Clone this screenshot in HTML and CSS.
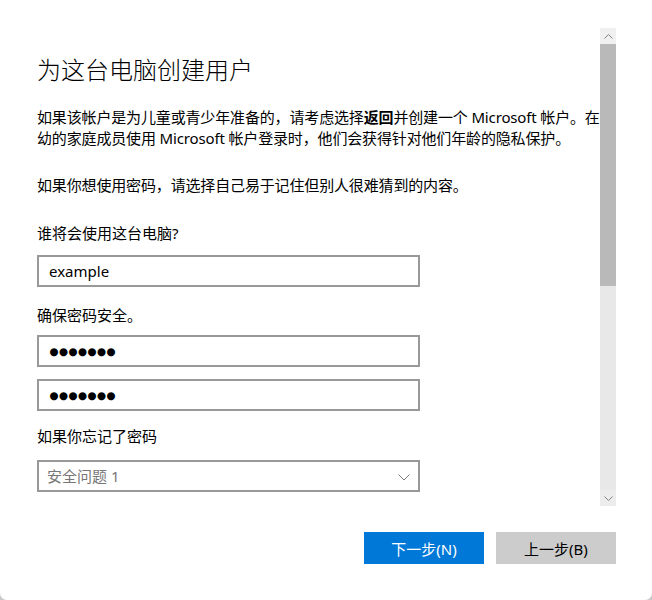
FILE: index.html
```html
<!DOCTYPE html>
<html lang="zh-CN">
<head>
<meta charset="utf-8">
<title>为这台电脑创建用户</title>
<link rel="stylesheet" href="styles.css">
</head>
<body>
<div class="window">
  <div class="main">
    <div class="view">
      <h1 class="title">为这台电脑创建用户</h1>
      <p class="para">如果该帐户是为儿童或青少年准备的，请考虑选择<b>返回</b>并创建一个 Microsoft 帐户。在年<br>幼的家庭成员使用 Microsoft 帐户登录时，他们会获得针对他们年龄的隐私保护。</p>
      <p class="para para2">如果你想使用密码，请选择自己易于记住但别人很难猜到的内容。</p>
      <div class="label label1">谁将会使用这台电脑?</div>
      <div class="field">example</div>
      <div class="label label2">确保密码安全。</div>
      <div class="field pwd"><span class="dots"><span>●</span><span>●</span><span>●</span><span>●</span><span>●</span><span>●</span><span>●</span></span></div>
      <div class="field pwd pwd2"><span class="dots"><span>●</span><span>●</span><span>●</span><span>●</span><span>●</span><span>●</span><span>●</span></span></div>
      <div class="label label3">如果你忘记了密码</div>
      <div class="field select">
        <span class="placeholder">安全问题 1</span>
        <svg class="chev" width="12" height="7" viewBox="0 0 12 7"><path d="M0.5 0.5 L6 6 L11.5 0.5" fill="none" stroke="#7a7a7a" stroke-width="1"/></svg>
      </div>
    </div>
    <div class="scrollbar">
      <div class="sb-btn"><svg width="9" height="5" viewBox="0 0 9 5"><path d="M0.5 4.5 L4.5 0.5 L8.5 4.5" fill="none" stroke="#858585" stroke-width="1"/></svg></div>
      <div class="sb-thumb"></div>
      <div class="sb-track"></div>
      <div class="sb-btn sb-down"><svg width="9" height="5" viewBox="0 0 9 5"><path d="M0.5 0.5 L4.5 4.5 L8.5 0.5" fill="none" stroke="#858585" stroke-width="1"/></svg></div>
    </div>
  </div>
  <div class="footer">
    <button class="btn primary">下一步(N)</button>
    <button class="btn secondary">上一步(B)</button>
  </div>
</div>
</body>
</html>
```
FILE: styles.css
```css
html, body {
  margin: 0;
  padding: 0;
  background: #c9c9c9;
}
body {
  font-family: "Noto Sans", "Noto Sans CJK SC", sans-serif;
  color: #000;
  font-size: 15px;
}
.window {
  width: 652px;
  height: 600px;
  background: #fff;
  border-radius: 0 0 7px 7px;
  display: flex;
  flex-direction: column;
  overflow: hidden;
}
.main {
  display: flex;
  padding-top: 28px;
  height: 478px;
  padding-right: 36px;
}
.view {
  flex: 1;
  overflow: hidden;
  padding-left: 37px;
  min-width: 0;
}
.title {
  margin: 25px 0 0;
  font-size: 24px;
  line-height: 32px;
  font-weight: 300;
  font-family: "Noto Sans CJK SC", sans-serif;
}
.para {
  margin: 22px 0 0;
  line-height: 21px;
  white-space: nowrap;
  letter-spacing: -0.15px;
}
.para b {
  font-weight: 700;
}
.para2 {
  margin-top: 26px;
}
.label {
  line-height: 21px;
}
.label1 { margin-top: 27px; }
.label2 { margin-top: 18px; }
.label3 { margin-top: 15px; }
.field {
  box-sizing: border-box;
  width: 383px;
  height: 32px;
  border: 2px solid #999;
  margin-top: 11px;
  padding-left: 10px;
  line-height: 28px;
  display: flex;
  align-items: center;
}
.pwd { margin-top: 9px; }
.pwd2 { margin-top: 12px; }
.dots {
  display: flex;
  font-family: "DejaVu Sans", sans-serif;
  font-size: 10.5px;
  line-height: 28px;
}
.dots span {
  width: 9.5px;
  display: flex;
  justify-content: center;
}
.select {
  padding-left: 8px;
  padding-right: 8px;
  justify-content: space-between;
  margin-top: 13px;
}
.placeholder {
  color: #777;
}
.chev {
  display: block;
  margin-top: 2px;
}
.scrollbar {
  width: 16px;
  display: flex;
  flex-direction: column;
  background: #e8e8e8;
}
.sb-btn {
  height: 16px;
  background: #f0f0f0;
  display: flex;
  align-items: center;
  justify-content: center;
}
.sb-down {
  background: #ececec;
}
.sb-thumb {
  height: 242px;
  background: #b9b9b9;
}
.sb-track {
  flex: 1;
}
.footer {
  display: flex;
  justify-content: flex-end;
  gap: 12px;
  padding-right: 36px;
  margin-top: 26px;
}
.btn {
  width: 120px;
  height: 32px;
  border: none;
  font-family: "Noto Sans", "Noto Sans CJK SC", sans-serif;
  font-size: 15px;
  padding: 0;
}
.primary {
  background: #0078d7;
  color: #fff;
}
.secondary {
  background: #cccccc;
  color: #000;
}
```
